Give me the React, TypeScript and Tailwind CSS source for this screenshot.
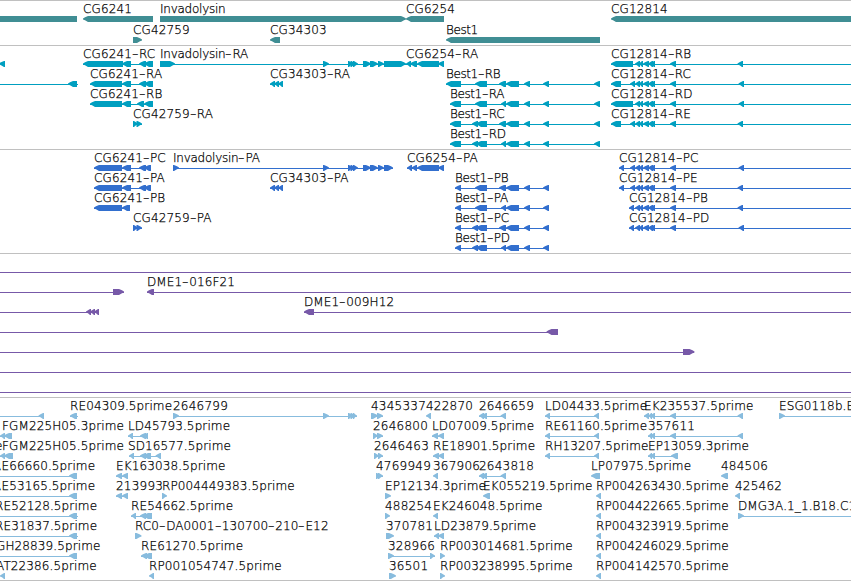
type Exon = [number, number];

type Feature = {
    name?: string;
    x?: number;
    dir?: "left" | "right";
    exons?: Exon[];
    line?: [number, number];
};

const WIDTH = 851;
const HEAD = 5;

// exon groups shared by several transcripts
const invMid: Exon[] = [[323, 329], [348, 353], [350.5, 355.5], [353, 358], [363, 371], [370, 378], [378, 384]];
const bestMid: Exon[] = [[499, 506], [506, 519], [524, 530], [543, 549]];
const bestMidB: Exon[] = [[501, 506], [506, 519], [524, 530], [543, 549]];
const cgShort: Exon[] = [[635, 640], [638.5, 643], [643, 649], [648, 653], [650, 655], [670, 676]];
const cgLong: Exon[] = [[630, 635], ...cgShort];
const cg34303: Exon[] = [[270, 275], [274, 279], [278, 283]];
const cg42759: Exon[] = [[133, 138], [136.5, 142]];

const genes: Feature[][] = [
    [
        { exons: [[-20, 77]] },
        { name: "CG6241", x: 83, exons: [[83, 153]] },
        { name: "Invadolysin", x: 160, dir: "right", exons: [[160, 406]] },
        { name: "CG6254", x: 406, exons: [[406, 444]] },
        { name: "CG12814", x: 611, exons: [[611, 870]] },
    ],
    [
        { name: "CG42759", x: 133, dir: "right", exons: [[133, 142]] },
        { name: "CG34303", x: 270, exons: [[270, 280]] },
        { name: "Best1", x: 446, exons: [[446, 600]] },
    ],
];

const transcripts: Feature[][] = [
    [
        { exons: [[-1, 5]] },
        { name: "CG6241-RC", x: 83, exons: [[83, 123], [122, 131], [139, 146], [144, 153]] },
        { name: "Invadolysin-RA", x: 160, dir: "right", exons: [[160, 175], ...invMid, [384, 406]] },
        { name: "CG6254-RA", x: 406, exons: [[406, 411], [410, 417], [417, 439], [438, 444]] },
        { name: "CG12814-RB", x: 611, exons: [[611, 633], ...cgShort, [737.5, 743]], line: [611, WIDTH] },
    ],
    [
        { exons: [[68, 77]], line: [0, 78] },
        { name: "CG6241-RA", x: 90, exons: [[90, 122], [122, 131], [139, 146], [144, 153]] },
        { name: "CG34303-RA", x: 270, exons: cg34303 },
        { name: "Best1-RB", x: 446, exons: [[446, 461], [475, 487], ...bestMid, [594, 600]] },
        { name: "CG12814-RC", x: 611, exons: [[611, 621], ...cgLong, [738.5, 744]], line: [611, WIDTH] },
    ],
    [
        { name: "CG6241-RB", x: 90, exons: [[90, 122], [122, 131], [137, 144], [144, 153]] },
        { name: "Best1-RA", x: 450, exons: [[450, 461], [475, 487], ...bestMidB, [594, 600]] },
        { name: "CG12814-RD", x: 611, exons: [[611, 633], ...cgShort, [738.5, 744]], line: [611, WIDTH] },
    ],
    [
        { name: "CG42759-RA", x: 133, dir: "right", exons: cg42759 },
        { name: "Best1-RC", x: 450, exons: [[450, 461], [472, 478], [476, 487], ...bestMid, [594, 600]] },
        { name: "CG12814-RE", x: 611, exons: [[611, 621], ...cgLong, [737.5, 743]], line: [611, WIDTH] },
    ],
    [{ name: "Best1-RD", x: 450, exons: [[450, 461], [472, 478], [476, 487], ...bestMidB, [594, 600]] }],
];

const proteins: Feature[][] = [
    [
        { name: "CG6241-PC", x: 94, exons: [[94, 122], [122, 131], [139, 146], [144, 151]] },
        { name: "Invadolysin-PA", x: 173, dir: "right", exons: [[173, 179], ...invMid, [384, 393]] },
        { name: "CG6254-PA", x: 407, exons: [[407, 412], [411.5, 417], [417, 439], [438, 444]] },
        { name: "CG12814-PC", x: 619, exons: [[619, 624], ...cgLong, [738.5, 744]], line: [619, WIDTH] },
    ],
    [
        { name: "CG6241-PA", x: 94, exons: [[94, 122], [122, 131], [139, 146], [144, 151]] },
        { name: "CG34303-PA", x: 270, exons: cg34303 },
        { name: "Best1-PB", x: 455, exons: [[455, 461], [475, 487], ...bestMid] },
        { name: "CG12814-PE", x: 619, exons: [[619, 624], ...cgLong, [737.5, 743]], line: [619, WIDTH] },
    ],
    [
        { name: "CG6241-PB", x: 94, exons: [[94, 122], [122, 130]] },
        { name: "Best1-PA", x: 455, exons: [[455, 461], [475, 487], ...bestMidB] },
        { name: "CG12814-PB", x: 629, exons: [[629, 634], ...cgShort, [737.5, 743]], line: [629, WIDTH] },
    ],
    [
        { name: "CG42759-PA", x: 133, dir: "right", exons: cg42759 },
        { name: "Best1-PC", x: 455, exons: [[455, 461], [472, 478], [476, 487], ...bestMid] },
        { name: "CG12814-PD", x: 629, exons: [[629, 634], ...cgShort, [738.5, 744]], line: [629, WIDTH] },
    ],
    [{ name: "Best1-PD", x: 455, exons: [[455, 461], [472, 478], [476, 487], ...bestMidB] }],
];

const clones: Feature[][] = [
    [{ line: [0, WIDTH] }],
    [
        { dir: "right", exons: [[113, 124]], line: [0, 124] },
        { name: "DME1-016F21", x: 147, exons: [[147, 154]], line: [147, WIDTH] },
    ],
    [
        { exons: [[86, 91], [90, 95], [94, 99]], line: [0, 99] },
        { name: "DME1-009H12", x: 304, exons: [[304, 314]], line: [304, WIDTH] },
    ],
    [{ exons: [[546.5, 558]], line: [0, 558] }],
    [{ dir: "right", exons: [[683, 694.5]], line: [0, 694] }],
    [{ line: [0, WIDTH] }],
    [{ line: [0, WIDTH] }],
];

const ests: Feature[][] = [
    [
        { exons: [[38.5, 44]], line: [0, 44] },
        { name: "RE04309.5prime", x: 70, exons: [[70, 77]], line: [70, 78] },
        { name: "2646799", x: 173, dir: "right", exons: [[173, 179], [323, 329], [348, 353], [350.5, 355.5], [353, 357]] },
        { name: "4345337", x: 371, dir: "right", exons: [[371, 378], [377, 383]] },
        { name: "422870", x: 426, exons: [[426, 431]] },
        { name: "2646659", x: 479, exons: [[479, 484], [481, 487], [500.5, 506]] },
        { name: "LD04433.5prime", x: 545, exons: [[545, 550], [594, 599]] },
        { name: "EK235537.5prime", x: 644, exons: [[644, 649], [648, 652], [650, 655], [670, 676], [737.5, 743]] },
        { name: "ESG0118b.B18.C1", x: 779, dir: "right", exons: [[779, 785]], line: [779, WIDTH] },
    ],
    [
        { name: "FGM225H05.3prime", x: 2, exons: [[0, 5], [4, 12]] },
        { name: "LD45793.5prime", x: 128, exons: [[128, 133], [140, 146], [143, 148]] },
        { name: "2646800", x: 373, dir: "right", exons: [[373, 378], [377, 383]] },
        { name: "LD07009.5prime", x: 432, exons: [[432, 438], [438, 444]] },
        { name: "RE61160.5prime", x: 545, exons: [[545, 550], [594, 599]] },
        { name: "357611", x: 648, exons: [[648, 652], [650, 655], [670, 676], [737.5, 743]] },
    ],
    [
        { name: "GH09510.5prime", x: -102 },
        { name: "FGM225H05.5prime", x: 2, exons: [[0, 5], [4, 13]] },
        { name: "SD16577.5prime", x: 128, exons: [[129, 134], [140, 146], [143, 151], [155.5, 161]] },
        { name: "2646463", x: 374, dir: "right", exons: [[374, 379], [378, 383]] },
        { name: "RE18901.5prime", x: 433, exons: [[433, 439], [438, 444]] },
        { name: "RH13207.5prime", x: 545, exons: [[545, 550], [594, 599]] },
        { name: "EP13059.3prime", x: 648, exons: [[648, 652], [650, 655], [671, 678]] },
    ],
    [
        { name: "RE66660.5prime", x: -7, exons: [[69, 77]], line: [0, 77] },
        { name: "EK163038.5prime", x: 116, exons: [[116, 122], [122, 128]] },
        { name: "4769949", x: 376, dir: "right", exons: [[376, 381], [378, 383]] },
        { name: "367906", x: 433, exons: [[433, 438]] },
        { name: "2643818", x: 479, exons: [[479, 484], [481, 487], [500.5, 506]] },
        { name: "LP07975.5prime", x: 591, exons: [[591, 600]] },
        { name: "484506", x: 721, exons: [[721, 728]] },
    ],
    [
        { name: "RE53165.5prime", x: -7, exons: [[69, 77]], line: [0, 77] },
        { name: "213993", x: 116, exons: [[116, 122], [122, 128]] },
        { name: "RP004449383.5prime", x: 162, dir: "right", exons: [[162, 167]] },
        { name: "EP12134.3prime", x: 385, dir: "right", exons: [[385, 391]] },
        { name: "EK055219.5prime", x: 483, exons: [[483, 490]] },
        { name: "RP004263430.5prime", x: 596, exons: [[596, 601]] },
        { name: "425462", x: 735, exons: [[735, 740]] },
    ],
    [
        { name: "RE52128.5prime", x: -5, exons: [[69, 77]], line: [0, 78] },
        { name: "RE54662.5prime", x: 131, exons: [[131, 136], [140, 146], [143, 152]] },
        { name: "488254", x: 385, dir: "right", exons: [[385, 390]] },
        { name: "EK246048.5prime", x: 433, exons: [[433, 438]] },
        { name: "RP004422665.5prime", x: 596, exons: [[596, 601]] },
        { name: "DMG3A.1_1.B18.C1.A1", x: 738, dir: "right", exons: [[738, 744]], line: [738, WIDTH] },
    ],
    [
        { name: "RE31837.5prime", x: -5, exons: [[69, 77]], line: [0, 78] },
        { name: "RC0-DA0001-130700-210-E12", x: 135, dir: "right", exons: [[135, 141.5]] },
        { name: "370781", x: 386, dir: "right", exons: [[386, 394]] },
        { name: "LD23879.5prime", x: 434, exons: [[434, 439], [438, 444]] },
        { name: "RP004323919.5prime", x: 596, exons: [[596, 601]] },
    ],
    [
        { name: "GH28839.5prime", x: -4, exons: [[69, 77]], line: [0, 77] },
        { name: "RE61270.5prime", x: 141, exons: [[141, 147], [144, 152]] },
        { name: "328966", x: 388, dir: "right", exons: [[388, 394], [430, 435]] },
        { name: "RP003014681.5prime", x: 440, dir: "right", exons: [[440, 445]] },
        { name: "RP004246029.5prime", x: 596, exons: [[596, 601]] },
    ],
    [
        { name: "AT22386.5prime", x: -4, exons: [[0, 5]] },
        { name: "RP001054747.5prime", x: 149, exons: [[149, 154]] },
        { name: "36501", x: 389, dir: "right", exons: [[389, 396]] },
        { name: "RP003238995.5prime", x: 440, dir: "right", exons: [[440, 445]] },
        { name: "RP004142570.5prime", x: 596, exons: [[596, 601]] },
    ],
];

// block with a slightly rounded arrow head on one side
const exonPoints = ([a, b]: Exon, dir: "left" | "right") => {
    const head = Math.min(HEAD, b - a - 1);
    return dir === "left"
        ? `${a},2.4 ${a + 2},1.3 ${a + head},0 ${b},0 ${b},6 ${a + head},6 ${a + 2},4.3 ${a},3.4`
        : `${a},0 ${b - head},0 ${b - 2},1.3 ${b},2.4 ${b},3.4 ${b - 2},4.3 ${b - head},6 ${a},6`;
};

const tracking = (name: string) => {
    if (/^\d+$/.test(name)) return "tracking-[0.22px]";
    if (name.startsWith("Best")) return "tracking-[-0.4px]";
    if (name.startsWith("Invad")) return "tracking-[-0.25px]";
    return "tracking-[0.12px]";
};

const Label = ({ name, x }: { name: string; x?: number }) => (
    <span className={`absolute top-0 leading-[17px] whitespace-pre text-black ${tracking(name)}`} style={{ left: x }}>
        {name.split("-").map((part, i) => (
            <span key={i}>
                {i > 0 && <span className="inline-block w-[7px] origin-left scale-x-150">-</span>}
                {part}
            </span>
        ))}
    </span>
);

const Glyph = ({ feature }: { feature: Feature }) => {
    const { exons = [], dir = "left" } = feature;
    const line = feature.line ?? [exons[0]?.[0] ?? 0, exons[exons.length - 1]?.[1] ?? 0];
    return (
        <g>
            {(feature.line || exons.length > 1) && (
                <rect x={line[0]} y={3} width={line[1] - line[0]} height={1} shapeRendering="crispEdges" />
            )}
            {exons.map((exon, i) => (
                <polygon key={i} points={exonPoints(exon, dir)} />
            ))}
        </g>
    );
};

const Row = ({ features, className }: { features: Feature[]; className: string }) => (
    <div className={`flex shrink-0 flex-col ${className}`}>
        <div className="relative h-[15px] shrink-0">
            {features.map((f, i) => (f.name ? <Label key={i} name={f.name} x={f.x} /> : null))}
        </div>
        <svg width={WIDTH} height={6} viewBox="0 0 851 6" fill="currentColor" className="block shrink-0">
            {features.map((f, i) => (
                <Glyph key={i} feature={f} />
            ))}
        </svg>
    </div>
);

type TrackProps = { rows: Feature[][]; className: string; rowClass?: string };

const Track = ({ rows, className, rowClass = "h-5" }: TrackProps) => (
    <section className={`flex shrink-0 flex-col border-t border-[#c0c0c0] ${className}`}>
        {rows.map((features, i) => (
            <Row key={i} features={features} className={rowClass} />
        ))}
    </section>
);

const App = () => {
    return (
        <main className="flex h-[581px] w-[851px] flex-col overflow-hidden border-b border-[#c0c0c0] bg-white font-['DejaVu_Sans',sans-serif] text-[12px] font-extralight [-webkit-text-stroke:0.25px_#000]">
            <Track rows={genes} className="h-[45px] text-[#408e94]" rowClass="h-[21px]" />
            <Track rows={transcripts} className="h-[104px] text-[#009fc0]" />
            <Track rows={proteins} className="h-[104px] text-[#326fce]" />
            <Track rows={clones} className="h-36 text-[#7759a8]" />
            <Track rows={ests} className="h-[183px] text-[#88bcde]" />
        </main>
    );
};

export default App;
